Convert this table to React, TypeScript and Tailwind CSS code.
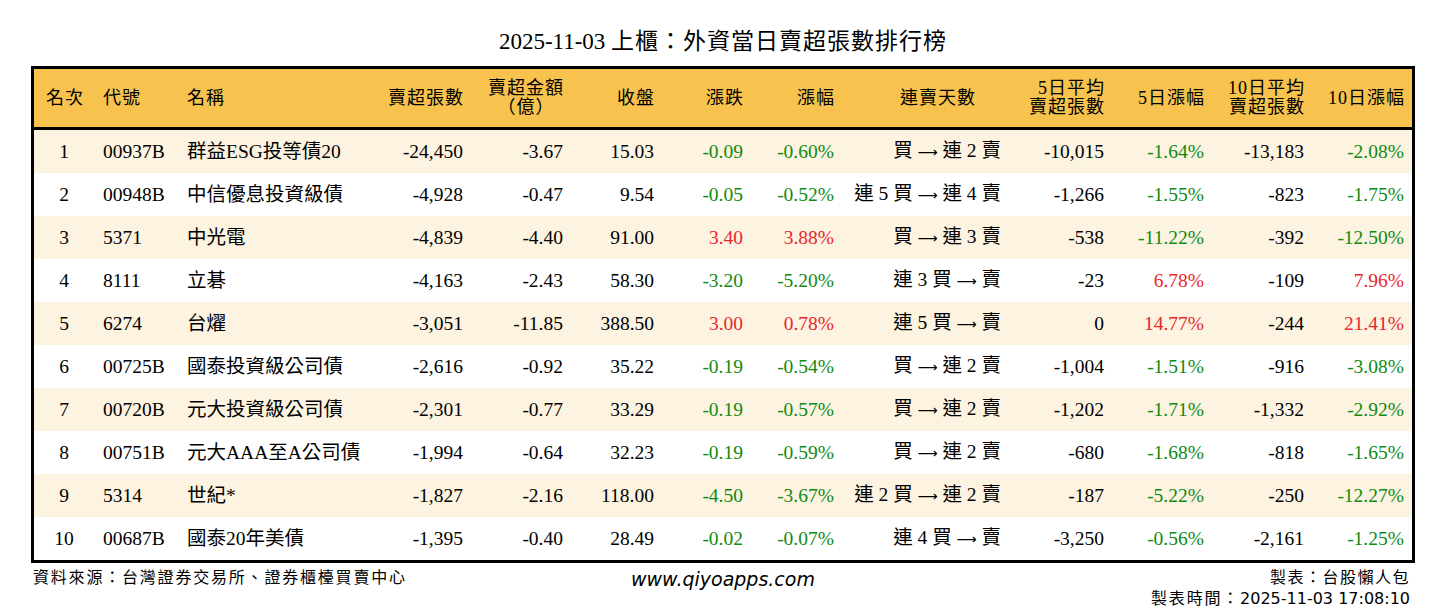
import React from "react";

type Row = {
  rank: string;
  code: string;
  name: string;
  sell: string;
  amt: string;
  close: string;
  chg: string;
  pct: string;
  streak: string;
  avg5: string;
  pct5: string;
  avg10: string;
  pct10: string;
};

const rows: Row[] = [
  { rank: "1", code: "00937B", name: "群益ESG投等債20", sell: "-24,450", amt: "-3.67", close: "15.03", chg: "-0.09", pct: "-0.60%", streak: "買 → 連 2 賣", avg5: "-10,015", pct5: "-1.64%", avg10: "-13,183", pct10: "-2.08%" },
  { rank: "2", code: "00948B", name: "中信優息投資級債", sell: "-4,928", amt: "-0.47", close: "9.54", chg: "-0.05", pct: "-0.52%", streak: "連 5 買 → 連 4 賣", avg5: "-1,266", pct5: "-1.55%", avg10: "-823", pct10: "-1.75%" },
  { rank: "3", code: "5371", name: "中光電", sell: "-4,839", amt: "-4.40", close: "91.00", chg: "3.40", pct: "3.88%", streak: "買 → 連 3 賣", avg5: "-538", pct5: "-11.22%", avg10: "-392", pct10: "-12.50%" },
  { rank: "4", code: "8111", name: "立碁", sell: "-4,163", amt: "-2.43", close: "58.30", chg: "-3.20", pct: "-5.20%", streak: "連 3 買 → 賣", avg5: "-23", pct5: "6.78%", avg10: "-109", pct10: "7.96%" },
  { rank: "5", code: "6274", name: "台燿", sell: "-3,051", amt: "-11.85", close: "388.50", chg: "3.00", pct: "0.78%", streak: "連 5 買 → 賣", avg5: "0", pct5: "14.77%", avg10: "-244", pct10: "21.41%" },
  { rank: "6", code: "00725B", name: "國泰投資級公司債", sell: "-2,616", amt: "-0.92", close: "35.22", chg: "-0.19", pct: "-0.54%", streak: "買 → 連 2 賣", avg5: "-1,004", pct5: "-1.51%", avg10: "-916", pct10: "-3.08%" },
  { rank: "7", code: "00720B", name: "元大投資級公司債", sell: "-2,301", amt: "-0.77", close: "33.29", chg: "-0.19", pct: "-0.57%", streak: "買 → 連 2 賣", avg5: "-1,202", pct5: "-1.71%", avg10: "-1,332", pct10: "-2.92%" },
  { rank: "8", code: "00751B", name: "元大AAA至A公司債", sell: "-1,994", amt: "-0.64", close: "32.23", chg: "-0.19", pct: "-0.59%", streak: "買 → 連 2 賣", avg5: "-680", pct5: "-1.68%", avg10: "-818", pct10: "-1.65%" },
  { rank: "9", code: "5314", name: "世紀*", sell: "-1,827", amt: "-2.16", close: "118.00", chg: "-4.50", pct: "-3.67%", streak: "連 2 買 → 連 2 賣", avg5: "-187", pct5: "-5.22%", avg10: "-250", pct10: "-12.27%" },
  { rank: "10", code: "00687B", name: "國泰20年美債", sell: "-1,395", amt: "-0.40", close: "28.49", chg: "-0.02", pct: "-0.07%", streak: "連 4 買 → 賣", avg5: "-3,250", pct5: "-0.56%", avg10: "-2,161", pct10: "-1.25%" },
];

const color = (v: string) =>
  v.startsWith("-") ? "text-[#108a10]" : v === "0" || v === "0.00%" ? "text-black" : "text-[#e8262b]";

const GRID =
  "grid grid-cols-[60px_84px_197px_96px_100px_91px_89px_91px_167px_103px_100px_100px_100px]";

function Streak({ text }: { text: string }) {
  const [a, b] = text.split("→");
  return (
    <>
      {a}
      <span style={{ fontFamily: '"DejaVu Sans", sans-serif' }} className="text-[14px]">
        ⟶
      </span>
      {b}
    </>
  );
}

export default function App() {
  return (
    <div
      className="w-[1446px] h-[612px] bg-white text-black overflow-hidden"
      style={{ fontFamily: '"Liberation Serif", "Noto Sans CJK TC", serif' }}
    >
      <div className="pt-[28px] h-[66px] text-center text-[23px] leading-[28px]">
        2025-11-03 <span className="tracking-[1px]">上櫃：外資當日賣超張數排行榜</span>
      </div>
      <div className="mx-auto w-[1384px] border-[3px] border-black">
        <div className={`${GRID} h-[61px] items-center bg-[#F7C24E] border-b-[3px] border-black text-[18px] leading-[19px] tracking-[1px]`}>
          <div className="text-center pl-[2px]">名次</div>
          <div className="pl-[9px]">代號</div>
          <div className="pl-[9px]">名稱</div>
          <div className="text-right pr-[7px]">賣超張數</div>
          <div className="text-right pr-[7px]">
            <span className="inline-block text-center">
              賣超金額
              <br />
              （億）
            </span>
          </div>
          <div className="text-right pr-[7px]">收盤</div>
          <div className="text-right pr-[7px]">漲跌</div>
          <div className="text-right pr-[7px]">漲幅</div>
          <div className="text-right pr-[33px]">連賣天數</div>
          <div className="text-right pr-[7px]">
            5日平均
            <br />
            賣超張數
          </div>
          <div className="text-right pr-[7px]">5日漲幅</div>
          <div className="text-right pr-[7px]">
            10日平均
            <br />
            賣超張數
          </div>
          <div className="text-right pr-[7px]">10日漲幅</div>
        </div>
        {rows.map((r, i) => (
          <div
            key={r.rank}
            className={`${GRID} h-[43px] items-center text-[19.5px] leading-[24px] ${
              i % 2 === 0 ? "bg-[#FDF3E1]" : "bg-white"
            }`}
          >
            <div className="text-center">{r.rank}</div>
            <div className="pl-[9px]">{r.code}</div>
            <div className="pl-[9px] whitespace-nowrap">{r.name}</div>
            <div className="text-right pr-[8px]">{r.sell}</div>
            <div className="text-right pr-[8px]">{r.amt}</div>
            <div className="text-right pr-[8px]">{r.close}</div>
            <div className={`text-right pr-[8px] ${color(r.chg)}`}>{r.chg}</div>
            <div className={`text-right pr-[8px] ${color(r.pct)}`}>{r.pct}</div>
            <div className="text-right pr-[8px] whitespace-pre">
              <Streak text={r.streak} />
            </div>
            <div className="text-right pr-[8px]">{r.avg5}</div>
            <div className={`text-right pr-[8px] ${color(r.pct5)}`}>{r.pct5}</div>
            <div className="text-right pr-[8px]">{r.avg10}</div>
            <div className={`text-right pr-[8px] ${color(r.pct10)}`}>{r.pct10}</div>
          </div>
        ))}
      </div>
      <div
        className="mx-auto w-[1384px] grid grid-cols-3 text-[16px] leading-[21px]"
        style={{ fontFamily: '"DejaVu Sans", "Noto Sans CJK TC", sans-serif' }}
      >
        <div className="pt-[4px] pl-[2px] tracking-[1.8px] whitespace-nowrap">
          資料來源：台灣證券交易所、證券櫃檯買賣中心
        </div>
        <div className="pt-[6px] text-center italic text-[19px]">www.qiyoapps.com</div>
        <div className="pt-[4px] pr-[5px] text-right whitespace-nowrap">
          <div className="tracking-[1.5px]">製表：台股懶人包</div>
          <div>
            <span className="tracking-[1.8px]">製表時間：</span>2025-11-03 17:08:10
          </div>
        </div>
      </div>
    </div>
  );
}
